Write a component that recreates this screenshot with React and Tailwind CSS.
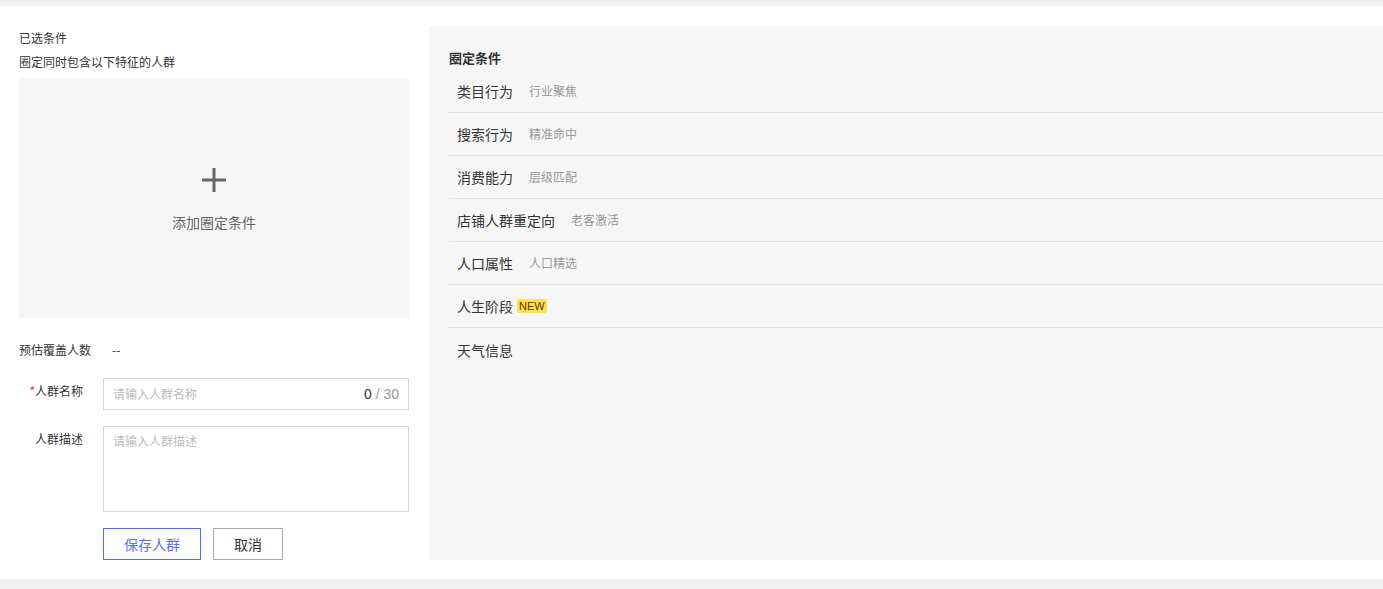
import React from 'react';

const font = { fontFamily: '"Microsoft YaHei", "Noto Sans CJK SC", "Liberation Sans", sans-serif' };

const rows = [
  { name: '类目行为', sub: '行业聚焦' },
  { name: '搜索行为', sub: '精准命中' },
  { name: '消费能力', sub: '层级匹配' },
  { name: '店铺人群重定向', sub: '老客激活' },
  { name: '人口属性', sub: '人口精选' },
  { name: '人生阶段', badge: 'NEW' },
  { name: '天气信息' },
];

const App = () => {
  return (
    <div className="h-[589px] w-[1383px] bg-[#f0f0f0] pt-[6px] pb-[10px] text-[#333]" style={font}>
      <div className="flex h-full bg-white pt-5 pb-[19px]">
        {/* left: selected conditions + form */}
        <div className="flex w-[429px] shrink-0 flex-col pl-[19px] pr-5">
          <div className="mt-[4px] text-xs leading-[16px]">已选条件</div>
          <div className="mt-2 text-xs leading-[16px]">圈定同时包含以下特征的人群</div>
          <div className="mt-2 flex h-[240px] flex-col items-center justify-center bg-[#f6f6f6] cursor-pointer">
            <svg width="26" height="26" viewBox="0 0 26 26" className="mt-[2px]">
              <rect x="11.5" y="1" width="3" height="24" fill="#666" />
              <rect x="1" y="11.5" width="24" height="3" fill="#666" />
            </svg>
            <div className="mt-[19px] text-sm text-[#666]">添加圈定条件</div>
          </div>

          <div className="mt-[24px] flex items-center text-xs leading-[16px]">
            <span className="w-[93px]">预估覆盖人数</span>
            <span>--</span>
          </div>

          <div className="mt-[20px] flex">
            <label className="w-[64px] shrink-0 pt-[5px] text-right text-xs leading-[16px]">
              <span className="text-[#f5222d]">*</span>人群名称
            </label>
            <div className="ml-5 flex h-8 flex-1 items-center border border-[#d9d9d9] px-[9px]">
              <input
                className="flex-1 bg-transparent text-xs outline-none placeholder:text-[#bbb]"
                placeholder="请输入人群名称"
                style={font}
              />
              <span className="text-sm text-[#999]" style={{ fontFamily: '"Liberation Sans", sans-serif' }}>
                <span className="text-[#333]">0</span> / 30
              </span>
            </div>
          </div>

          <div className="mt-4 flex">
            <label className="w-[64px] shrink-0 pt-[5px] text-right text-xs leading-[16px]">人群描述</label>
            <textarea
              className="ml-5 h-[86px] flex-1 resize-none border border-[#d9d9d9] px-[9px] py-[6px] text-xs outline-none placeholder:text-[#bbb]"
              placeholder="请输入人群描述"
              style={font}
            />
          </div>

          <div className="mt-4 flex gap-3 pl-[84px]">
            <button className="h-8 w-[98px] border border-[#4f6bff] text-sm text-[#5b6dff]">保存人群</button>
            <button className="h-8 w-[70px] border border-[#aaa] text-sm text-[#333]">取消</button>
          </div>
        </div>

        {/* right: condition list */}
        <div className="flex-1 bg-[#f6f6f6] pl-5 pt-[24px]">
          <div className="text-[13px] font-bold leading-[16px]">圈定条件</div>
          <div className="mt-[4px]">
            {rows.map((r, i) => (
              <div
                key={r.name}
                className={`flex h-[43px] items-center pl-2 ${i < rows.length - 1 ? 'border-b border-[#e3e3e3]' : ''}`}
              >
                <span className="text-sm">{r.name}</span>
                {r.sub && <span className="ml-4 text-xs text-[#999]">{r.sub}</span>}
                {r.badge && (
                  <span
                    className="ml-[4px] rounded-[2px] bg-[#ffe04a] px-[2px] text-[11px] leading-[14px] text-[#5a3a00]"
                    style={{ fontFamily: '"Liberation Sans", sans-serif' }}
                  >
                    {r.badge}
                  </span>
                )}
              </div>
            ))}
          </div>
        </div>
      </div>
    </div>
  );
};

export default App;
